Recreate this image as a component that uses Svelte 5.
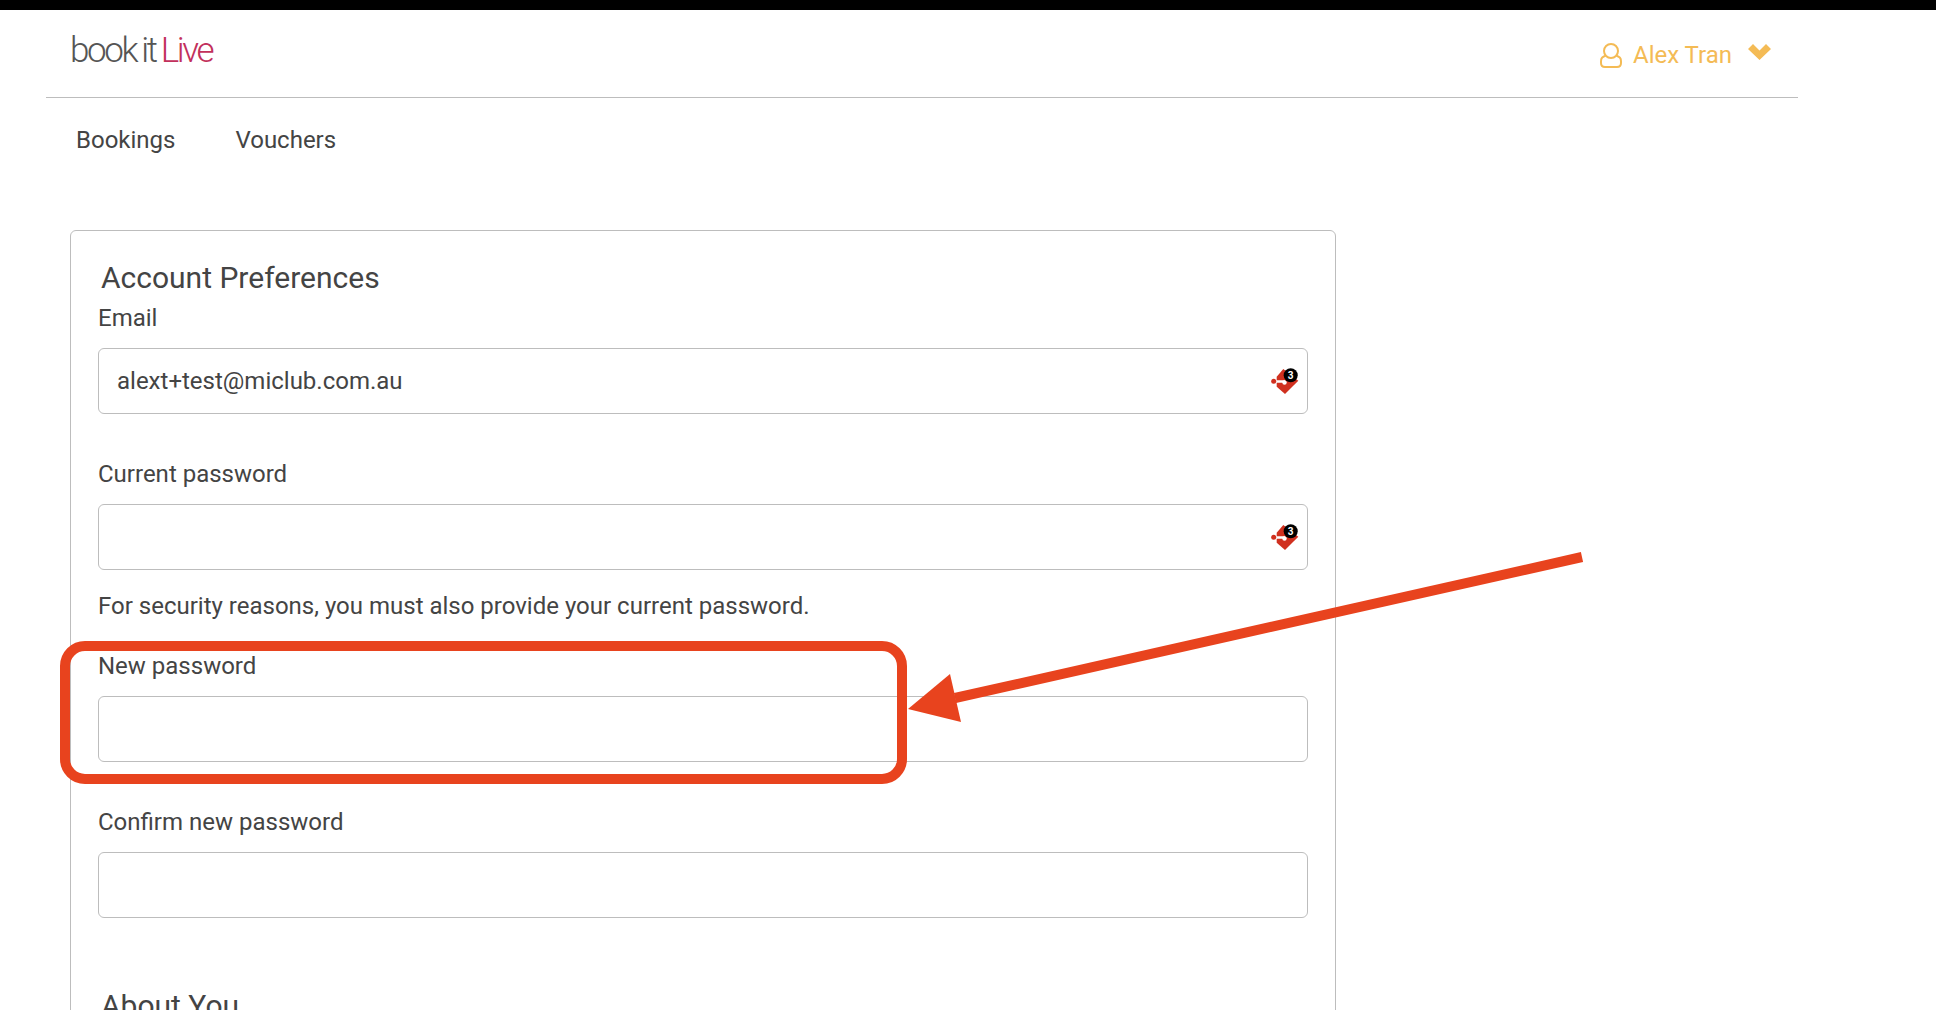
<script>
	const fields = [
		{ label: 'Email', value: 'alext+test@miclub.com.au', badge: true },
		{ label: 'Current password', value: '', badge: true, help: 'For security reasons, you must also provide your current password.' },
		{ label: 'New password', value: '', badge: false },
		{ label: 'Confirm new password', value: '', badge: false }
	];
</script>

<div class="page">
	<div class="topbar"></div>

	<header class="header">
		<div class="logo">book it <span class="live">Live</span></div>
		<div class="user">
			<svg class="user-icon" width="22" height="25" viewBox="0 0 22 25" fill="none" stroke="#f4bb55" stroke-width="2">
				<path d="M5.500 12.800C2.800 13.500 1 15.500 1 18.200v1.800C1 22.500 2.800 24 5 24h12c2.200 0 4-1.500 4-4v-1.800c0-2.700-1.800-4.700-4.500-5.400" />
				<ellipse cx="11" cy="8" rx="7" ry="7" />
			</svg>
			<span class="user-name">Alex Tran</span>
			<svg class="chevron" width="23" height="16" viewBox="0 0 23 16" fill="#f4bb55">
				<path d="M0 5 5 0 11.500 6.500 18 0 23 5 11.500 16z" />
			</svg>
		</div>
	</header>

	<nav class="nav">
		<a href="#bookings">Bookings</a>
		<a href="#vouchers">Vouchers</a>
	</nav>

	<section class="card">
		<h2>Account Preferences</h2>
		{#each fields as field}
			<div class="field">
				<label for={field.label}>{field.label}</label>
				<div class="control">
					<input id={field.label} type="text" value={field.value} />
					{#if field.badge}
						<svg class="badge" width="30" height="30" viewBox="0 0 30 30">
							<path d="M6.700 10.700 13.300 3 28.300 14.700 15 28 6.700 20.700z" fill="#d0301f" />
							<path d="M5 15.500H15" stroke="#fff" stroke-width="2.500" />
							<circle cx="14.500" cy="16.500" r="2.200" fill="#fff" />
							<circle cx="3.700" cy="15.300" r="2.500" fill="#d0301f" />
							<circle cx="20.700" cy="9.300" r="7" fill="#000" />
							<text x="20.700" y="13" text-anchor="middle">3</text>
						</svg>
					{/if}
				</div>
				{#if field.help}
					<p class="help">{field.help}</p>
				{/if}
			</div>
		{/each}
		<h2 class="about">About You</h2>
	</section>

	<svg class="annotation" width="1936" height="1010" viewBox="0 0 1936 1010" fill="none">
		<rect x="65" y="646" width="837" height="133" rx="20" stroke="#e8431e" stroke-width="10" />
		<path d="M955 698 1582 557" stroke="#e8431e" stroke-width="10" />
		<path d="M908 709 950 674 961 722z" fill="#e8431e" />
	</svg>
</div>

<style>
	:global(body) {
		margin: 0;
		background: #fff;
		font-family: Roboto, "Liberation Sans", sans-serif;
		color: #444;
	}

	.page {
		position: relative;
		height: 1010px;
		overflow: hidden;
	}

	.topbar {
		height: 10px;
		background: #000;
	}

	.header {
		display: flex;
		justify-content: space-between;
		align-items: flex-start;
		box-sizing: border-box;
		width: 1752px;
		height: 88px;
		margin-left: 46px;
		padding: 21px 27px 0 24px;
		border-bottom: 1px solid #bdbdbd;
	}

	.logo {
		font-size: 35px;
		line-height: 40px;
		font-weight: 300;
		letter-spacing: -2.4px;
		word-spacing: -1px;
		color: #555;
	}

	.live {
		color: #c2305c;
	}

	.user {
		display: flex;
		align-items: center;
		gap: 11px;
		padding-top: 10px;
		color: #f4bb55;
		font-size: 24px;
		line-height: 28px;
	}

	.chevron {
		margin-left: 5px;
		margin-top: -6px;
	}

	.nav {
		display: flex;
		gap: 60px;
		padding: 26px 0 0 76px;
		height: 132px;
		box-sizing: border-box;
	}

	.nav a {
		color: #444;
		font-size: 24px;
		line-height: 32px;
		text-decoration: none;
	}

	.card {
		box-sizing: border-box;
		width: 1266px;
		height: 900px;
		margin-left: 70px;
		padding: 29px 27px;
		border: 1px solid #bdbdbd;
		border-radius: 6px;
	}

	h2 {
		margin: 0 0 6px 3px;
		font-size: 30px;
		line-height: 36px;
		font-weight: 400;
		color: #444;
	}

	.field {
		display: flex;
		flex-direction: column;
		margin-bottom: 44px;
	}

	.field:has(.help) {
		margin-bottom: 0;
	}

	label {
		font-size: 24px;
		line-height: 32px;
		margin-bottom: 14px;
	}

	.control {
		position: relative;
	}

	input {
		display: block;
		box-sizing: border-box;
		width: 100%;
		height: 66px;
		padding: 0 18px;
		border: 1px solid #bdbdbd;
		border-radius: 6px;
		outline: none;
		font-family: inherit;
		font-size: 24px;
		color: #444;
		background: #fff;
	}

	.badge {
		position: absolute;
		right: 8px;
		top: 18px;
	}

	.badge text {
		fill: #fff;
		font-size: 10px;
		font-weight: 700;
	}

	.help {
		margin: 20px 0 28px;
		font-size: 24px;
		line-height: 32px;
	}

	.about {
		margin-top: 70px;
	}

	.annotation {
		position: absolute;
		left: 0;
		top: 0;
		pointer-events: none;
	}
</style>
